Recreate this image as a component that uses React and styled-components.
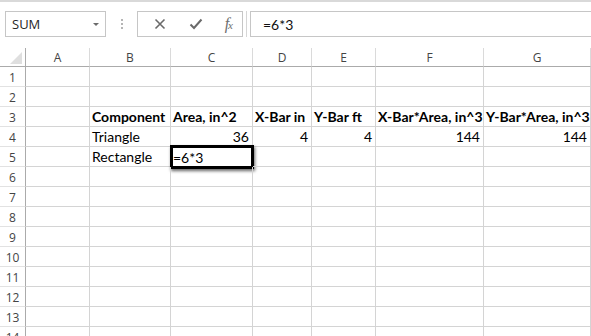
import React from 'react';
import styled, { createGlobalStyle } from 'styled-components';

const GlobalStyle = createGlobalStyle`
  body {
    margin: 0;
    background: #ffffff;
    overflow: hidden;
  }
`;

const Page = styled.div`
  width: 591px;
  height: 336px;
  overflow: hidden;
  border-top: 2px solid #d9d9d9;
  box-sizing: border-box;
  font-family: "Open Sans", "Liberation Sans", sans-serif;
`;

// formula bar
const FormulaBar = styled.div`
  display: flex;
  align-items: stretch;
  height: 26px;
  margin-top: 9px;
  padding-left: 5px;
`;

const NameBox = styled.div`
  width: 101px;
  box-sizing: border-box;
  border: 1px solid #c6c6c6;
  display: flex;
  align-items: center;
  justify-content: space-between;
  padding: 0 6px 0 6px;
  font-size: 13px;
  color: #262626;
`;

const DropArrow = styled.span`
  width: 0;
  height: 0;
  border-left: 3px solid transparent;
  border-right: 3px solid transparent;
  border-top: 3px solid #6b6b6b;
  margin-top: 1px;
`;

const Grip = styled.div`
  width: 31px;
  display: flex;
  flex-direction: column;
  align-items: center;
  justify-content: center;
  gap: 2px;
`;

const GripDot = styled.span`
  width: 2px;
  height: 2px;
  background: #b5b5b5;
`;

const ButtonGroup = styled.div`
  width: 106px;
  box-sizing: border-box;
  border: 1px solid #c6c6c6;
  display: flex;
  align-items: center;
  justify-content: space-between;
  padding: 0 10px 0 14px;
`;

const IconButton = styled.span`
  display: flex;
  align-items: center;
  justify-content: center;
  width: 16px;
  height: 16px;
  color: #6a6a6a;
`;

const FxLabel = styled.span`
  font-family: "Liberation Serif", serif;
  font-style: italic;
  font-size: 16px;
  color: #6e6e6e;
  letter-spacing: -1px;

  small {
    font-size: 11px;
  }
`;

const Splitter = styled.div`
  width: 7px;
  display: flex;
  justify-content: center;

  &::before {
    content: '';
    width: 1px;
    height: 100%;
    border-left: 1px solid #d6d6d6;
    margin-left: 1px;
  }
`;

const FormulaInput = styled.div`
  flex: 1;
  border: 1px solid #c6c6c6;
  border-right: none;
  display: flex;
  align-items: center;
  padding-left: 12px;
  font-family: "Lato", "Liberation Sans", sans-serif;
  font-size: 14px;
  color: #111;
`;

// sheet grid
const Sheet = styled.div`
  margin-top: 11px;
  display: grid;
  grid-template-columns: 26px 64px 81px 82px 59px 64px 108px 107px;
  grid-template-rows: 19px;
  grid-auto-rows: 20px;
`;

const Corner = styled.div`
  position: relative;
  border-right: 1px solid #ababab;
  border-bottom: 1px solid #ababab;
  box-sizing: border-box;

  &::after {
    content: '';
    position: absolute;
    right: 3px;
    bottom: 2px;
    width: 0;
    height: 0;
    border-left: 12px solid transparent;
    border-bottom: 12px solid #dfdfdf;
  }
`;

const ColHead = styled.div`
  box-sizing: border-box;
  border-bottom: 1px solid #ababab;
  border-right: 1px solid #dadada;
  display: flex;
  align-items: center;
  justify-content: center;
  font-size: 12px;
  color: #444;
  padding-top: 2px;
  padding-bottom: 2px;
`;

const RowHead = styled.div`
  box-sizing: border-box;
  border-right: 1px solid #ababab;
  border-bottom: 1px solid #e2e2e2;
  display: flex;
  align-items: center;
  justify-content: center;
  font-size: 12px;
  color: #444;
  padding-top: 1px;
`;

const Cell = styled.div`
  position: relative;
  box-sizing: border-box;
  border-right: 1px solid #d4d4d4;
  border-bottom: 1px solid #d4d4d4;
  display: flex;
  align-items: flex-end;
  justify-content: ${p => (p.$num ? 'flex-end' : 'flex-start')};
  padding: 0 3px 1px 2px;
  font-family: "Lato", "Liberation Sans", sans-serif;
  font-size: 14px;
  font-weight: ${p => (p.$bold ? 700 : 400)};
  color: #000;
  white-space: nowrap;
  line-height: 17px;
`;

const Selection = styled.div`
  position: absolute;
  left: -1px;
  top: -2px;
  width: 84px;
  height: 24px;
  box-sizing: border-box;
  border: 3px solid #000;
  box-shadow: 1px 2px 3px rgba(0, 0, 0, 0.6);
  display: flex;
  align-items: center;
  font-size: 14px;
`;

const columns = ['A', 'B', 'C', 'D', 'E', 'F', 'G'];

const data = {
  3: [null, { v: 'Component', b: true }, { v: 'Area, in^2', b: true }, { v: 'X-Bar in', b: true }, { v: 'Y-Bar ft', b: true }, { v: 'X-Bar*Area, in^3', b: true }, { v: 'Y-Bar*Area, in^3', b: true }],
  4: [null, { v: 'Triangle' }, { v: '36', n: true }, { v: '4', n: true }, { v: '4', n: true }, { v: '144', n: true }, { v: '144', n: true }],
  5: [null, { v: 'Rectangle' }, { v: '=6*3', sel: true }],
};

const XIcon = () => (
  <svg width="12" height="12" viewBox="0 0 12 12">
    <path d="M1.5 1.5 L10.5 10.5 M10.5 1.5 L1.5 10.5" stroke="currentColor" strokeWidth="1.6" fill="none" />
  </svg>
);

const CheckIcon = () => (
  <svg width="14" height="12" viewBox="0 0 14 12">
    <path d="M1.5 6.5 L5 10 L12.5 1.5" stroke="currentColor" strokeWidth="2" fill="none" />
  </svg>
);

const App = () => {
  const rows = Array.from({ length: 14 }, (_, i) => i + 1);

  return (
    <Page>
      <GlobalStyle />
      <FormulaBar>
        <NameBox>
          SUM
          <DropArrow />
        </NameBox>
        <Grip>
          <GripDot />
          <GripDot />
          <GripDot />
        </Grip>
        <ButtonGroup>
          <IconButton><XIcon /></IconButton>
          <IconButton><CheckIcon /></IconButton>
          <FxLabel>f<small>x</small></FxLabel>
        </ButtonGroup>
        <Splitter />
        <FormulaInput>=6*3</FormulaInput>
      </FormulaBar>

      <Sheet>
        <Corner />
        {columns.map(c => (
          <ColHead key={c}>{c}</ColHead>
        ))}
        {rows.map(r => (
          <React.Fragment key={r}>
            <RowHead>{r}</RowHead>
            {columns.map((c, ci) => {
              const cell = data[r] && data[r][ci];
              if (cell && cell.sel) {
                return (
                  <Cell key={c}>
                    <Selection>{cell.v}</Selection>
                  </Cell>
                );
              }
              return (
                <Cell key={c} $bold={cell && cell.b} $num={cell && cell.n}>
                  {cell ? cell.v : ''}
                </Cell>
              );
            })}
          </React.Fragment>
        ))}
      </Sheet>
    </Page>
  );
};

export default App;
